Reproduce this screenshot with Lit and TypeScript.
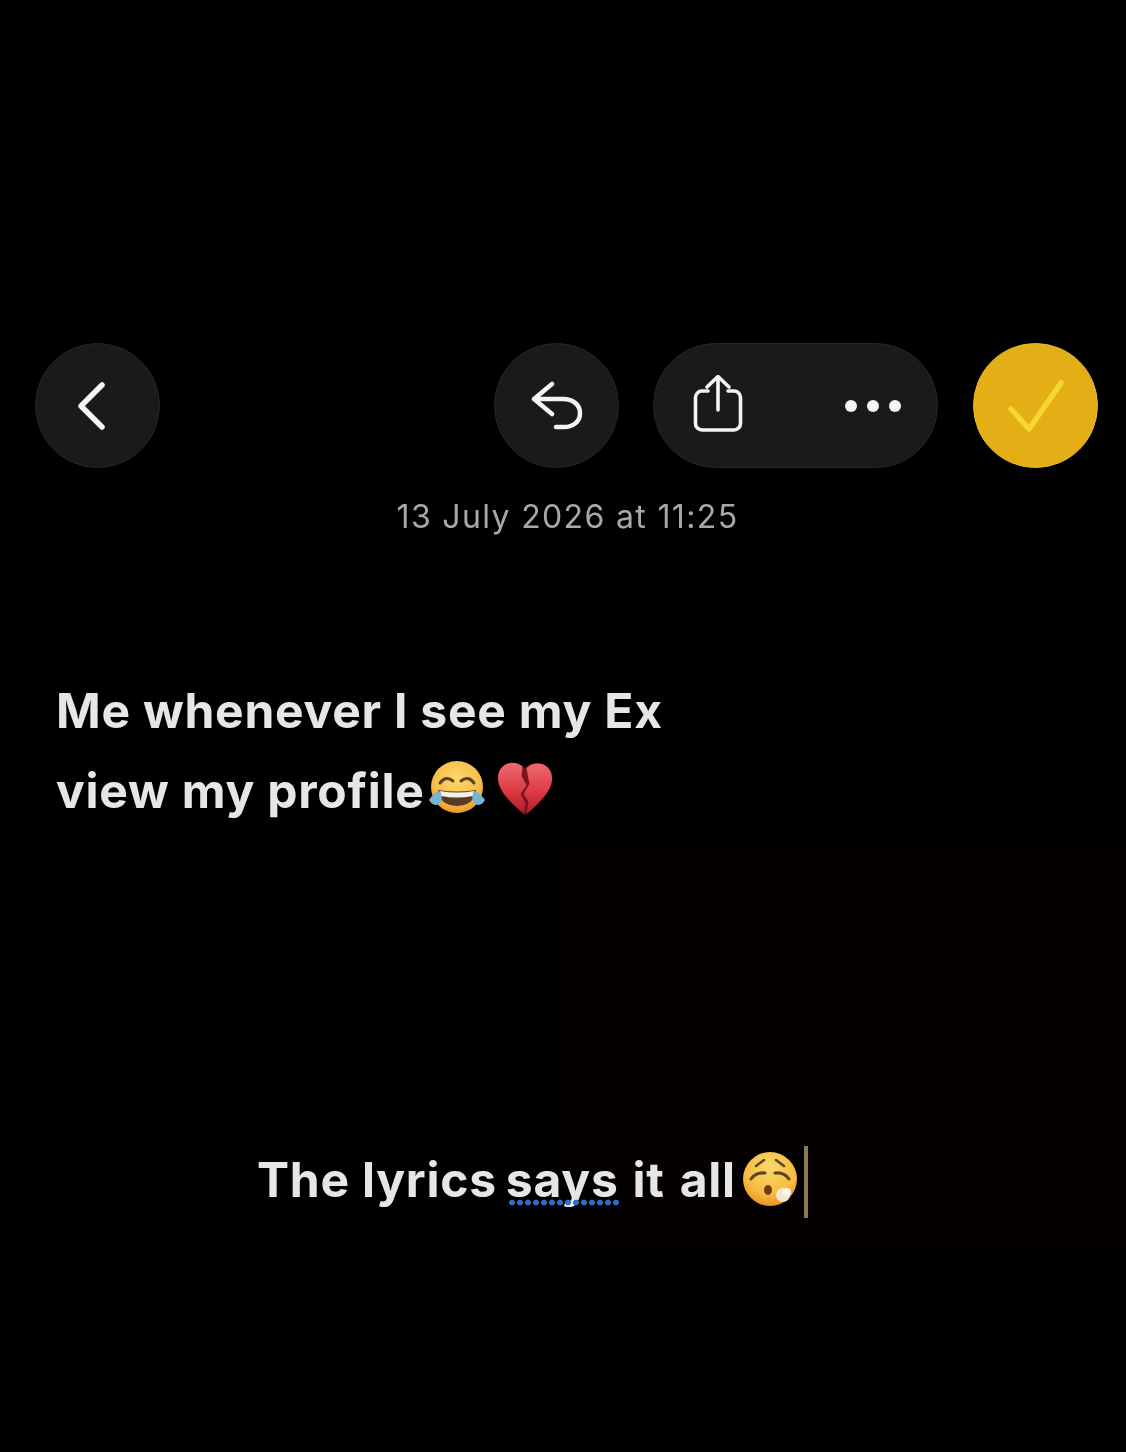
import { LitElement, html, css, svg } from "lit";
import { customElement } from "lit/decorators.js";

const joyEmoji = svg`
  <defs>
    <radialGradient id="joyFace" cx="50%" cy="35%" r="70%">
      <stop offset="0%" stop-color="#fbd86a" />
      <stop offset="65%" stop-color="#f6bd4a" />
      <stop offset="100%" stop-color="#e88f22" />
    </radialGradient>
  </defs>
  <circle cx="30" cy="29" r="26" fill="url(#joyFace)" />
  <path d="M13 25q6-8 13-2M34 23q7-6 13 2" fill="none" stroke="#5d4326" stroke-width="3" stroke-linecap="round" />
  <path d="M11 32q19 3 38 0q-1 15-19 16q-18-1-19-16z" fill="#5a3a20" />
  <path d="M13 33q17 3 34 0l-1 5q-16 3-32 0z" fill="#f4f0ea" />
  <path d="M2 42q5-8 11-9q4 9-1 13q-6 3-10-4zM58 42q-5-8-11-9q-4 9 1 13q6 3 10-4z" fill="#74b5d8" />
`;

const heartEmoji = svg`
  <defs>
    <linearGradient id="heartFill" x1="0" y1="0" x2="0" y2="1">
      <stop offset="0%" stop-color="#ee6a70" />
      <stop offset="55%" stop-color="#de3a44" />
      <stop offset="100%" stop-color="#a81e2b" />
    </linearGradient>
  </defs>
  <path d="M28 8C19-2 2 2 1 17c-1 14 14 27 27 38c13-11 29-24 28-38C55 2 37-2 28 8z" fill="#7c1420" />
  <path d="M26 6C18-1 3 2 1 16c-1 14 14 28 26 38l2-10-5-10 6-9-5-9z" fill="url(#heartFill)" />
  <path d="M30 8c8-9 25-6 26 9c1 14-14 27-26 38l2-13-5-8 6-10z" fill="url(#heartFill)" />
`;

const wearyEmoji = svg`
  <defs>
    <radialGradient id="wearyFace" cx="50%" cy="30%" r="75%">
      <stop offset="0%" stop-color="#fbd867" />
      <stop offset="65%" stop-color="#f6bb3f" />
      <stop offset="100%" stop-color="#ea8a1e" />
    </radialGradient>
  </defs>
  <circle cx="28" cy="28" r="27" fill="url(#wearyFace)" />
  <path d="M22 9l-8 6M34 9l8 6" fill="none" stroke="#5d4326" stroke-width="2.5" stroke-linecap="round" />
  <path d="M9 28q5-7 14-6M47 28q-5-7-14-6" fill="none" stroke="#5d4326" stroke-width="3" stroke-linecap="round" />
  <ellipse cx="26" cy="39" rx="4" ry="5" fill="#6a3d1c" />
  <circle cx="41" cy="44" r="7" fill="#f3e6d2" />
  <circle cx="45" cy="41" r="4" fill="#fbf5ea" />
`;

@customElement("app-root")
export class AppRoot extends LitElement {
    static styles = css`
        :host {
            display: block;
            background: #000;
            height: 1452px;
            font-family: Inter, "Liberation Sans", sans-serif;
            overflow: hidden;
        }
        .page {
            padding-top: 343px;
            height: 1109px;
            background: linear-gradient(#040001, #040001) no-repeat 550px 850px / 576px 400px;
            filter: blur(0.5px);
        }
        .toolbar {
            display: flex;
            align-items: center;
            padding: 0 28px 0 35px;
        }
        .btn {
            display: flex;
            align-items: center;
            justify-content: center;
            height: 125px;
            background: #1a1a1b;
            border: 1.5px solid #262627;
            box-sizing: border-box;
            border-radius: 63px;
        }
        .round {
            width: 125px;
        }
        .reply {
            margin-left: auto;
        }
        .pill {
            width: 285px;
            margin-left: 34px;
            padding: 0 36px 0 39px;
            justify-content: space-between;
        }
        .done {
            margin-left: 35px;
            background: #e4ae17;
            border-color: #e9bb2c;
        }
        .dots {
            display: flex;
            gap: 10px;
        }
        .dots i {
            width: 12px;
            height: 12px;
            border-radius: 50%;
            background: #f5f5f5;
        }
        svg.icon {
            fill: none;
            stroke: #f4f4f4;
            stroke-width: 5.5;
            stroke-linecap: round;
            stroke-linejoin: round;
        }
        .date {
            margin: 30px 0 0 9px;
            text-align: center;
            font-size: 32px;
            line-height: 38px;
            letter-spacing: 1.35px;
            color: #a8a8a8;
        }
        .message {
            margin: 135px 0 0 56px;
            font-size: 48px;
            font-weight: 700;
            line-height: 80px;
            letter-spacing: 0.75px;
            color: #e6e6e6;
        }
        .emoji {
            vertical-align: -8px;
        }
        .joy {
            margin-left: 2px;
        }
        .heart {
            margin-left: 10px;
        }
        .lyrics {
            display: flex;
            align-items: center;
            height: 72px;
            margin: 312px 0 0 257px;
            font-size: 48px;
            font-weight: 700;
            letter-spacing: 0.75px;
            color: #e6e6e6;
        }
        .squiggle {
            position: relative;
            margin: 0 14px 0 9px;
        }
        .squiggle::after {
            content: "";
            position: absolute;
            left: 2px;
            right: 0;
            bottom: 3px;
            height: 7px;
            background: radial-gradient(circle, #2f6cc4 2.6px, transparent 3.2px) 0 0 / 8px 7px repeat-x;
        }
        .rest {
            word-spacing: 3px;
        }
        .weary {
            margin-left: 6px;
        }
        .caret {
            width: 4px;
            height: 72px;
            margin: 6px 0 0 6px;
            background: #8a7a50;
        }
    `;

    render() {
        return html`
            <div class="page">
                <div class="toolbar">
                    <div class="btn round">
                        <svg class="icon" width="40" height="56" viewBox="0 0 40 56">
                            <path d="M27 7 6 28l21 21" transform="translate(-3 0)" />
                        </svg>
                    </div>
                    <div class="btn round reply">
                        <svg class="icon" width="52" height="52" viewBox="0 0 52 52" style="stroke-width:4.5">
                            <path d="M21 4 3 19l18 15M3 19h29c9 0 17 5 17 14s-7 14-16 14h-8" />
                        </svg>
                    </div>
                    <div class="btn pill">
                        <svg class="icon" width="50" height="62" viewBox="0 0 50 62" style="stroke-width:3.6">
                            <path d="M25 35V2M14 12 25 1.5 36 12" />
                            <path d="M15 16H9a6.5 6.5 0 0 0-6.500 6.500v26a6.500 6.500 0 0 0 6.500 6.500h32a6.500 6.500 0 0 0 6.500-6.500v-26a6.500 6.500 0 0 0-6.500-6.500h-6" />
                        </svg>
                        <div class="dots"><i></i><i></i><i></i></div>
                    </div>
                    <div class="btn round done">
                        <svg class="icon" width="56" height="52" viewBox="0 0 56 52" style="stroke:#f6d631">
                            <path d="M3 29l18 20L53 3" />
                        </svg>
                    </div>
                </div>
                <div class="date">13 July 2026 at 11:25</div>
                <div class="message">
                    Me whenever I see my Ex<br />
                    view my profile<svg class="emoji joy" width="60" height="58" viewBox="0 0 60 58">${joyEmoji}</svg><svg
                        class="emoji heart"
                        width="56"
                        height="56"
                        viewBox="0 0 57 56"
                    >${heartEmoji}</svg>
                </div>
                <div class="lyrics">
                    The lyrics<span class="squiggle">says</span><span class="rest">it all</span>
                    <svg class="weary" width="56" height="56" viewBox="0 0 56 56">${wearyEmoji}</svg>
                    <div class="caret"></div>
                </div>
            </div>
        `;
    }
}
